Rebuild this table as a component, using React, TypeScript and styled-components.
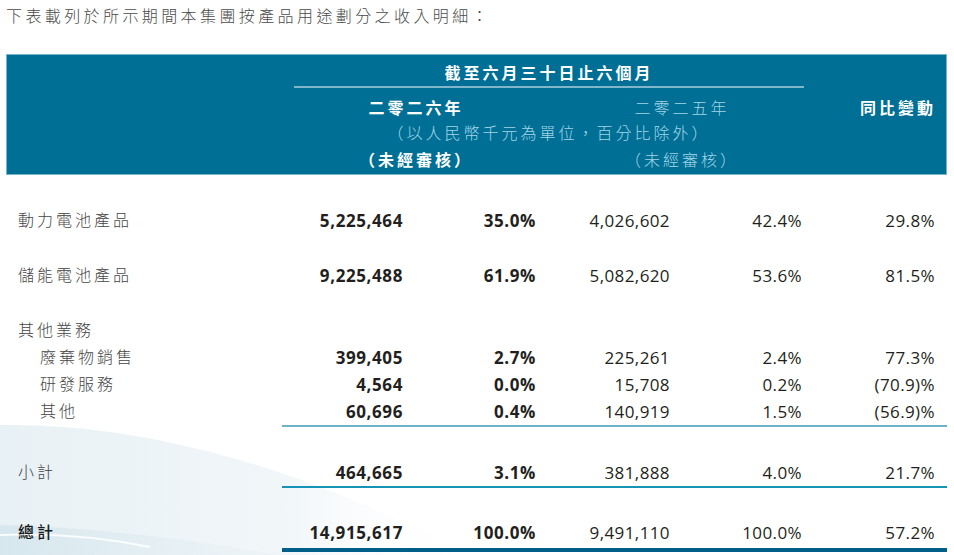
import React from "react";
import styled, { createGlobalStyle } from "styled-components";

const GlobalStyle = createGlobalStyle`
  html, body {
    margin: 0;
    padding: 0;
    background: #ffffff;
  }
  body {
    font-family: "Noto Sans CJK TC", "Noto Sans", sans-serif;
  }
`;

const COLS = "276px 133px 133px 134px 132px 133px";

const Page = styled.div`
  position: relative;
  width: 954px;
  height: 555px;
  overflow: hidden;
  box-sizing: border-box;
  padding: 0 7px 0 6px;
`;

const Backdrop = styled.svg`
  position: absolute;
  left: 0;
  bottom: 0;
  z-index: 0;
`;

const Content = styled.div`
  position: relative;
  z-index: 1;
`;

const Title = styled.p`
  margin: 0;
  font-size: 16px;
  line-height: 30px;
  letter-spacing: 3.4px;
  font-weight: 300;
  color: #4a4a4a;
`;

const HeaderBand = styled.div`
  margin-top: 24px;
  display: grid;
  grid-template-columns: ${COLS};
  grid-template-rows: 33px 31px 26px 29px;
  background: #006f96;
  border: 1px solid #74b6cc;
  font-size: 16px;
  letter-spacing: 3px;
`;

const PeriodCaption = styled.div`
  grid-column: 2 / 6;
  grid-row: 1;
  margin: 0 11px;
  padding-top: 7px;
  line-height: 20px;
  box-sizing: border-box;
  border-bottom: 2px solid #7fb6ca;
  text-align: center;
  color: #ffffff;
  font-weight: 700;
`;

const HeadCell = styled.div<{
  $col: string;
  $row: number;
  $align?: "center" | "right";
  $strong?: boolean;
  $top?: number;
}>`
  grid-column: ${(p) => p.$col};
  grid-row: ${(p) => p.$row};
  text-align: ${(p) => p.$align ?? "center"};
  padding-top: ${(p) => p.$top ?? 0}px;
  padding-right: ${(p) => (p.$align === "right" ? 12 : 0)}px;
  line-height: ${(p) => (p.$top ? 24 : p.$row === 3 ? 26 : 29)}px;
  color: ${(p) => (p.$strong ? "#ffffff" : "#a3d6e6")};
  font-weight: ${(p) => (p.$strong ? 700 : 300)};
`;

const Row = styled.div<{ $gap: number }>`
  display: grid;
  grid-template-columns: ${COLS};
  margin-top: ${(p) => p.$gap}px;
`;

const Label = styled.div<{ $indent?: boolean; $total?: boolean }>`
  padding-left: ${(p) => (p.$indent ? 34 : 12)}px;
  padding-bottom: 4px;
  font-size: 16px;
  line-height: 22px;
  letter-spacing: 3px;
  color: ${(p) => (p.$total ? "#1a1a1a" : "#454545")};
  font-weight: ${(p) => (p.$total ? 500 : 300)};
  white-space: nowrap;
`;

type Rule = "light" | "mid" | "heavy";

const ruleStyle: Record<Rule, string> = {
  light: "border-bottom: 2px solid #6db2c8;",
  mid: "border-bottom: 2px solid #1793b6;",
  heavy: "padding-bottom: 3px; border-bottom: 4px solid #005f88;",
};

const Num = styled.div<{ $bold?: boolean; $rule?: Rule }>`
  text-align: right;
  padding-right: 12px;
  font-family: "Open Sans", "Liberation Sans", sans-serif;
  font-size: 17px;
  line-height: 25px;
  letter-spacing: ${(p) => (p.$bold ? 0.6 : 0.4)}px;
  font-weight: ${(p) => (p.$bold ? 700 : 400)};
  color: #231f20;
  padding-bottom: 1px;
  ${(p) => (p.$rule ? ruleStyle[p.$rule] : "")}
`;

interface Line {
  label: string;
  values?: [string, string, string, string, string];
  gap: number;
  indent?: boolean;
  total?: boolean;
  rule?: Rule;
}

const lines: Line[] = [
  { label: "動力電池產品", values: ["5,225,464", "35.0%", "4,026,602", "42.4%", "29.8%"], gap: 33 },
  { label: "儲能電池產品", values: ["9,225,488", "61.9%", "5,082,620", "53.6%", "81.5%"], gap: 29 },
  { label: "其他業務", gap: 29 },
  { label: "廢棄物銷售", values: ["399,405", "2.7%", "225,261", "2.4%", "77.3%"], gap: 1, indent: true },
  { label: "研發服務", values: ["4,564", "0.0%", "15,708", "0.2%", "(70.9)%"], gap: 1, indent: true },
  { label: "其他", values: ["60,696", "0.4%", "140,919", "1.5%", "(56.9)%"], gap: 1, indent: true, rule: "light" },
  { label: "小計", values: ["464,665", "3.1%", "381,888", "4.0%", "21.7%"], gap: 33, rule: "mid" },
  { label: "總計", values: ["14,915,617", "100.0%", "9,491,110", "100.0%", "57.2%"], gap: 32, total: true, rule: "heavy" },
];

const Wave = () => (
  <Backdrop width={954} height={150} viewBox="0 0 954 150">
    <defs>
      <linearGradient id="haze" x1="0" y1="0" x2="1" y2="0">
        <stop offset="0" stopColor="#e8f1f5" />
        <stop offset="0.6" stopColor="#f1f6f9" />
        <stop offset="1" stopColor="#ffffff" stopOpacity="0" />
      </linearGradient>
      <linearGradient id="band" x1="0" y1="0" x2="1" y2="0">
        <stop offset="0" stopColor="#d6e7ee" />
        <stop offset="1" stopColor="#e6f0f4" stopOpacity="0.3" />
      </linearGradient>
    </defs>
    <path d="M0,20 C140,18 300,60 470,150 L0,150 Z" fill="url(#haze)" />
    <path d="M0,120 C90,122 190,134 280,150 L0,150 Z" fill="url(#band)" />
    <path d="M0,130 C50,128 100,132 150,142" stroke="#ffffff" strokeWidth="2" fill="none" opacity="0.85" />
  </Backdrop>
);

export default function App() {
  return (
    <Page>
      <GlobalStyle />
      <Wave />
      <Content>
        <Title>下表載列於所示期間本集團按產品用途劃分之收入明細：</Title>
        <HeaderBand>
          <PeriodCaption>截至六月三十日止六個月</PeriodCaption>
          <HeadCell $col="2 / 4" $row={2} $top={7} $strong>二零二六年</HeadCell>
          <HeadCell $col="4 / 6" $row={2} $top={7}>二零二五年</HeadCell>
          <HeadCell $col="6" $row={2} $top={7} $align="right" $strong>同比變動</HeadCell>
          <HeadCell $col="2 / 6" $row={3}>（以人民幣千元為單位，百分比除外）</HeadCell>
          <HeadCell $col="2 / 4" $row={4} $strong>（未經審核）</HeadCell>
          <HeadCell $col="4 / 6" $row={4}>（未經審核）</HeadCell>
        </HeaderBand>
        {lines.map((line) => (
          <Row key={line.label} $gap={line.gap}>
            <Label $indent={line.indent} $total={line.total}>
              {line.label}
            </Label>
            {line.values?.map((v, i) => (
              <Num key={i} $bold={i < 2} $rule={line.rule}>
                {v}
              </Num>
            ))}
          </Row>
        ))}
      </Content>
    </Page>
  );
}
